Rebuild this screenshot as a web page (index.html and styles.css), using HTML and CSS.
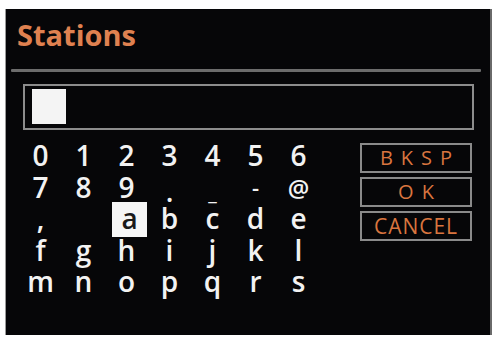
FILE: index.html
```html
<!DOCTYPE html>
<html>
<head>
<meta charset="utf-8">
<link rel="stylesheet" href="styles.css">
</head>
<body>
<div class="panel">
  <div class="title">Stations</div>
  <div class="sep"></div>
  <div class="input"><div class="cursor"></div></div>
  <div class="keys">
    <div class="grid">
      <span>0</span><span>1</span><span>2</span><span>3</span><span>4</span><span>5</span><span>6</span>
      <span>7</span><span>8</span><span>9</span><span class="dot">.</span><span class="under">_</span><span class="dash">-</span><span class="at">@</span>
      <span>,</span><span></span><span class="sel">a</span><span>b</span><span>c</span><span>d</span><span>e</span>
      <span>f</span><span>g</span><span>h</span><span>i</span><span>j</span><span>k</span><span>l</span>
      <span>m</span><span>n</span><span>o</span><span>p</span><span>q</span><span>r</span><span>s</span>
    </div>
    <div class="buttons">
      <div class="btn spaced">BKSP</div>
      <div class="btn spaced">OK</div>
      <div class="btn">CANCEL</div>
    </div>
  </div>
</div>
</body>
</html>
```

FILE: styles.css
```css
html, body {
  margin: 0;
  padding: 0;
  background: #ffffff;
}
body {
  padding: 9px 0 0 5px;
  font-family: "Open Sans", "DejaVu Sans", sans-serif;
}
.panel {
  width: 487px;
  height: 326px;
  background: #060608;
  border-left: 1px solid #9a9a9a;
  border-right: 2px solid #6a6a6a;
  box-sizing: border-box;
  padding-top: 6px;
}
.title {
  color: #df8150;
  font-size: 29px;
  font-weight: 700;
  line-height: 40px;
  padding-left: 11px;
}
.sep {
  margin: 14px 0 0 5px;
  width: 470px;
  height: 3px;
  background: #6c6c6c;
  border-radius: 1px;
}
.input {
  margin: 12px 0 0 17px;
  width: 451px;
  height: 46px;
  box-sizing: border-box;
  border: 2px solid #8c8c8c;
  padding: 3px 0 0 7px;
}
.cursor {
  width: 34px;
  height: 35px;
  background: #f4f4f4;
}
.keys {
  display: flex;
  margin-top: 10px;
  padding-left: 13px;
}
.grid {
  display: grid;
  grid-template-columns: repeat(7, 43px);
  grid-auto-rows: 31.5px;
  color: #f2f2f2;
  font-size: 28px;
  font-weight: 600;
  line-height: 31.5px;
  text-align: center;
}
.grid span {
  display: block;
}
.grid .sel {
  width: 35px;
  height: 35px;
  margin: -1px auto 0;
  background: #f6f6f6;
  color: #1a1a1a;
  line-height: 33px;
  position: relative;
  left: 3px;
}
.grid .dot {
  position: relative;
  top: 4px;
}
.grid .under {
  font-size: 20px;
  position: relative;
  top: 5px;
}
.grid .dash {
  font-size: 22px;
}
.grid .at {
  font-size: 24px;
}
.buttons {
  display: flex;
  flex-direction: column;
  gap: 4px;
  margin: 3px 0 0 40px;
}
.btn {
  width: 112px;
  height: 30px;
  box-sizing: border-box;
  border: 2px solid #8a8a8a;
  color: #d9753f;
  font-size: 21px;
  line-height: 26px;
  text-align: center;
  letter-spacing: 1px;
}
.btn.spaced {
  letter-spacing: 8px;
  padding-left: 8px;
  font-size: 20px;
}
```
